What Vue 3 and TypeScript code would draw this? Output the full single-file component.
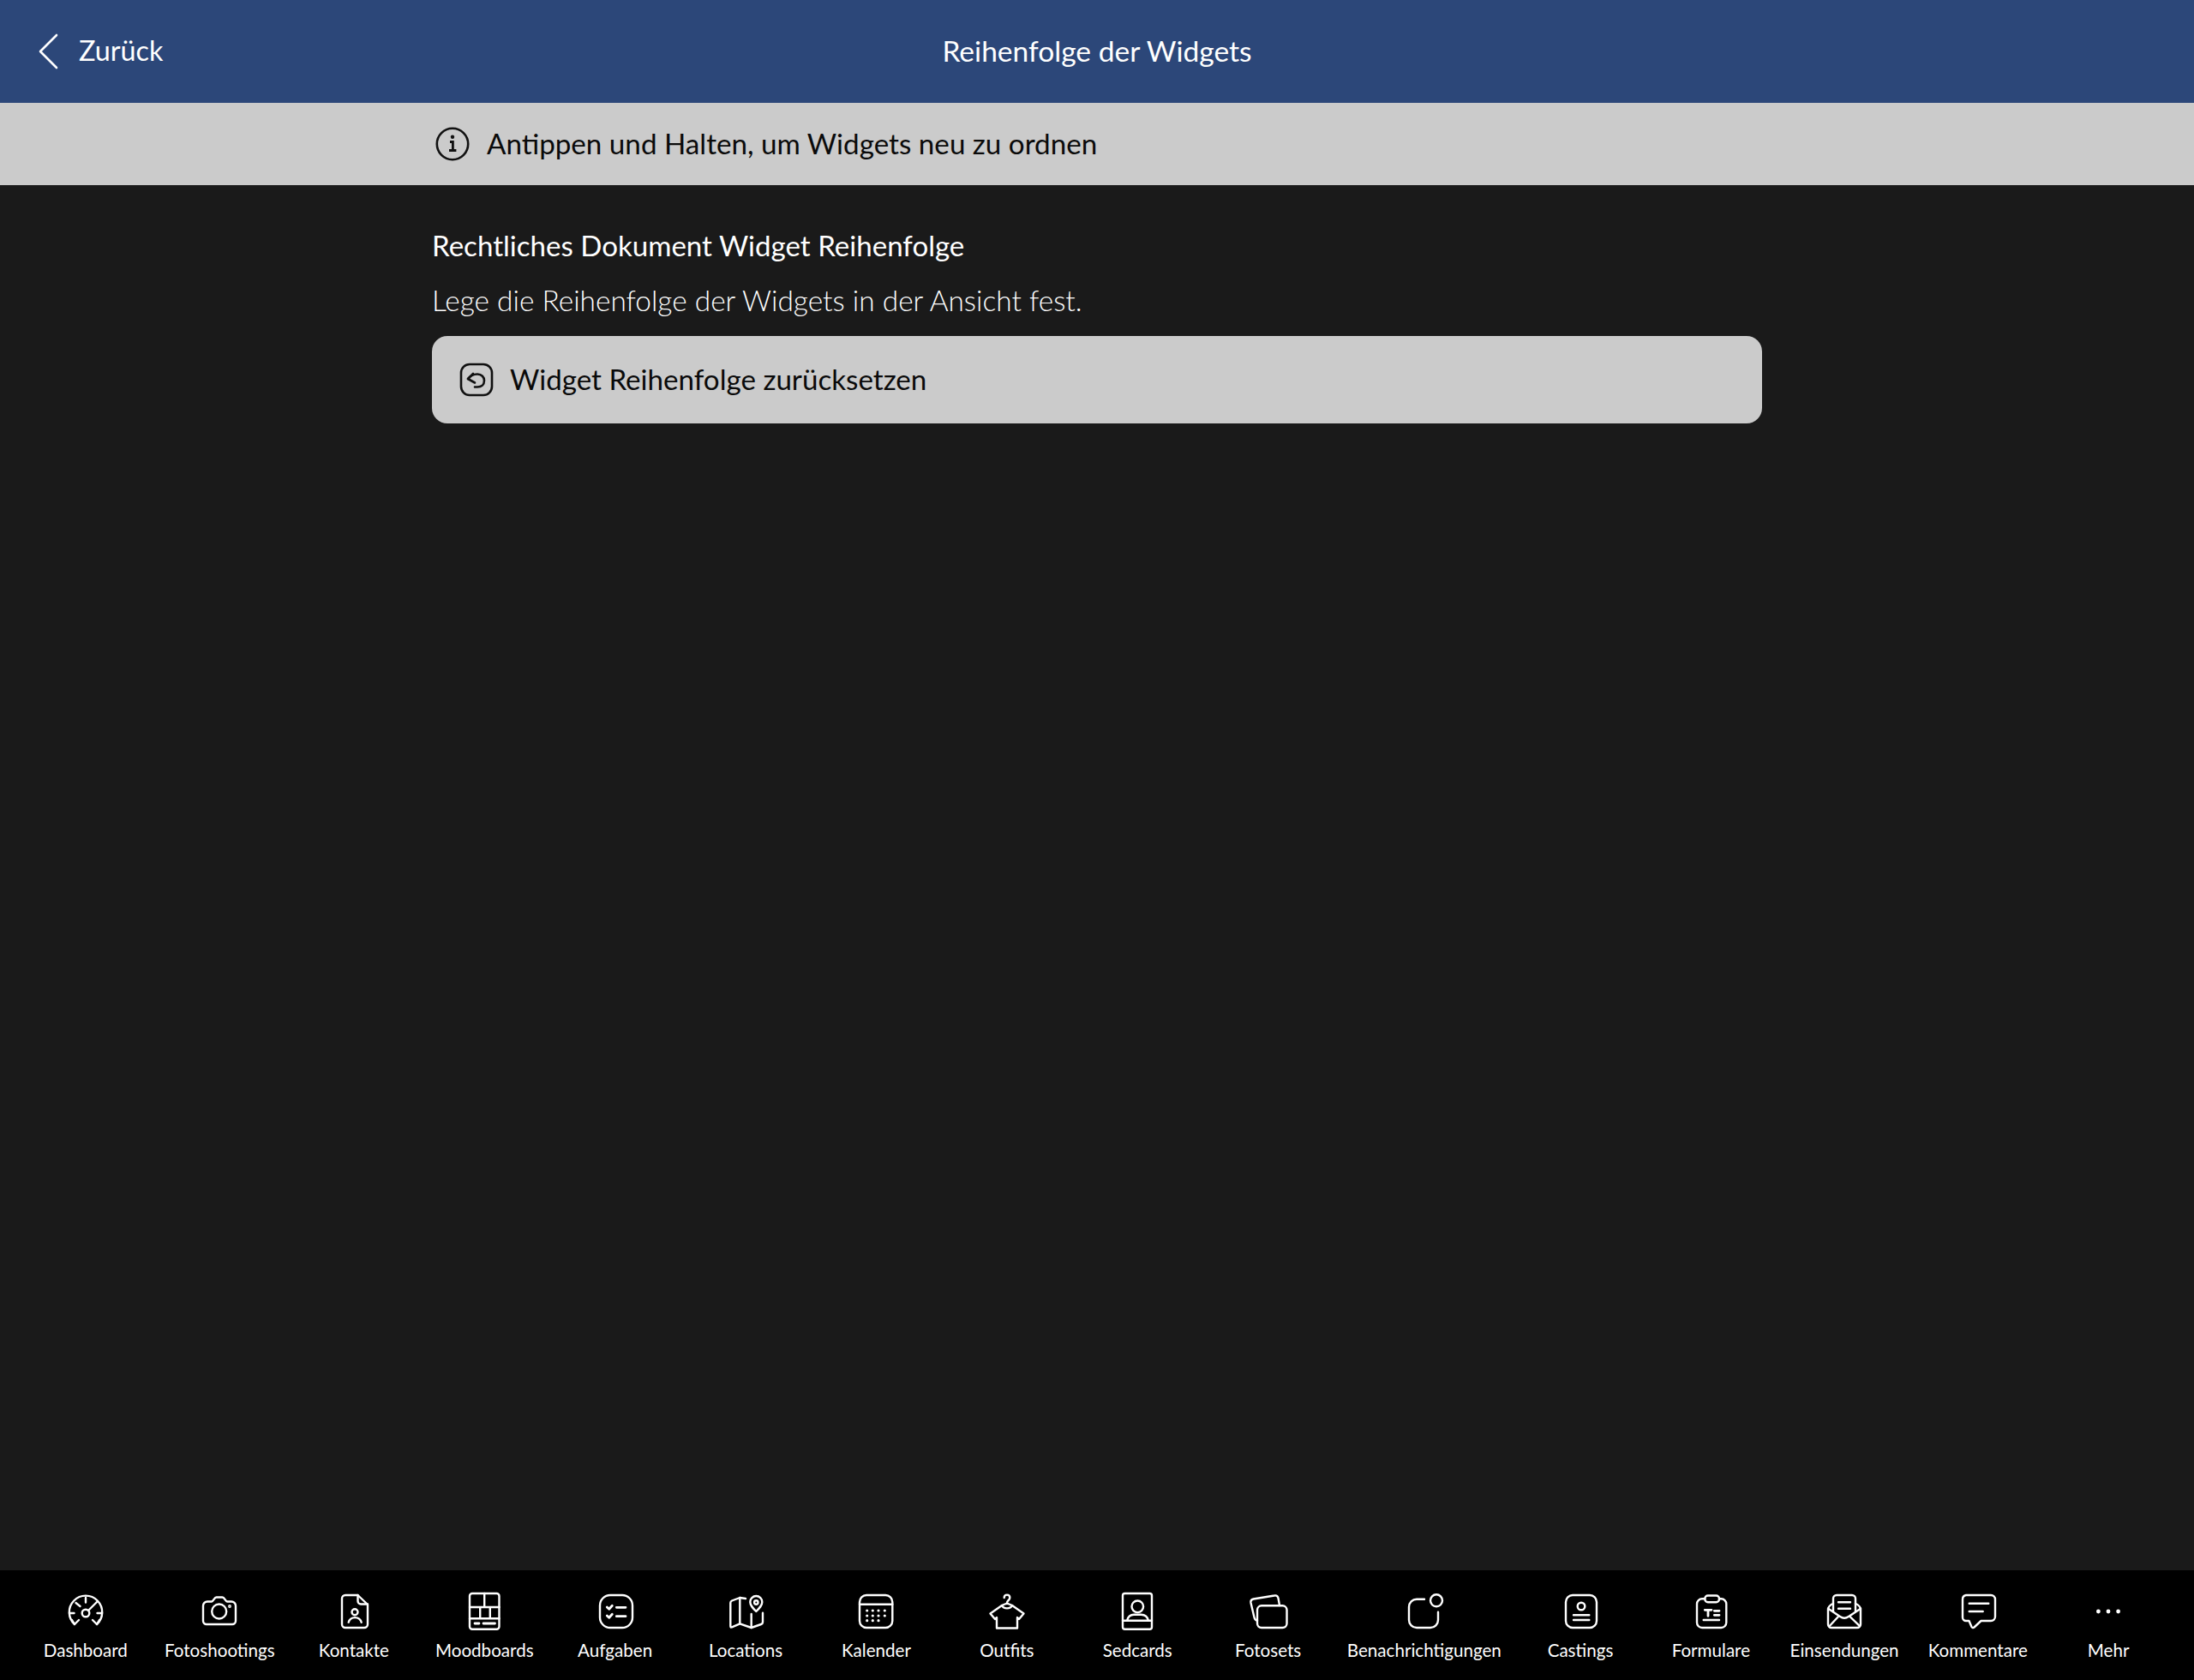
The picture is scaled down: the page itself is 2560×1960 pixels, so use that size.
<script setup lang="ts">
const tabs: string[] = [
  'Dashboard', 'Fotoshootings', 'Kontakte', 'Moodboards',
  'Aufgaben', 'Locations', 'Kalender', 'Outfits',
  'Sedcards', 'Fotosets', 'Benachrichtigungen', 'Castings',
  'Formulare', 'Einsendungen', 'Kommentare', 'Mehr',
]
</script>

<template>
  <div class="page">
    <header class="nav">
      <button class="back">
        <svg width="28" height="44" viewBox="0 0 28 44" fill="none"><path d="M24 3 L5 22 L24 41" stroke="#fff" stroke-width="2.6" stroke-linecap="round" stroke-linejoin="round"/></svg>
        <span>Zurück</span>
      </button>
      <h1>Reihenfolge der Widgets</h1>
    </header>
    <div class="hint">
      <div class="inner">
        <svg width="40" height="40" viewBox="0 0 40 40" fill="none"><circle cx="20" cy="20" r="18.2" stroke="#111" stroke-width="2.6"/><circle cx="20" cy="11.800" r="2.200" fill="#111"/><path d="M17 17.500h3.400v9.500M16 27.500h8.400" stroke="#111" stroke-width="2.8"/></svg>
        <span>Antippen und Halten, um Widgets neu zu ordnen</span>
      </div>
    </div>
    <main class="content">
      <div class="inner column">
        <h2>Rechtliches Dokument Widget Reihenfolge</h2>
        <p>Lege die Reihenfolge der Widgets in der Ansicht fest.</p>
        <button class="reset">
          <svg width="40" height="40" viewBox="0 0 40 40" fill="none" stroke="#111" stroke-width="2.6" stroke-linecap="round" stroke-linejoin="round"><rect x="2" y="2" width="36" height="36" rx="10"/><path d="M16 13 L10 19 L18 23.500"/><path d="M10 19 C13 15 17 13.500 21 13.500 C26 13.500 29 17 29 21 C29 25.500 26 28.500 21 28.500 H18"/></svg>
          <span>Widget Reihenfolge zurücksetzen</span>
        </button>
      </div>
    </main>
    <nav class="tabs">
      <div v-for="(t, i) in tabs" :key="t" class="tab">
        <svg width="48" height="48" viewBox="0 0 48 48" fill="none" stroke="#fff" stroke-width="2.4" stroke-linecap="round" stroke-linejoin="round">
          <g v-if="i === 0">
            <path d="M11 39 A19.200 19.200 0 1 1 37 39"/>
            <path d="M24 8v5.500M12.500 14l5 4M5 26h5.500M43 26h-5.500M11 39l5-5M37 39l-5-5M8 34l3 5M40 34l-3 5"/>
            <circle cx="24" cy="26" r="4.300"/><path d="M27 23l10-10"/>
          </g>
          <g v-else-if="i === 1">
            <path d="M10 12.500h5c2 0 3-5 5.500-5h7c2.500 0 3.500 5 5.500 5h5a5 5 0 0 1 5 5V35a4 4 0 0 1-4 4H9a4 4 0 0 1-4-4V17.500a5 5 0 0 1 5-5z"/>
            <circle cx="23.700" cy="24" r="8.500"/><circle cx="36" cy="18" r="0.700"/>
          </g>
          <g v-else-if="i === 2">
            <path d="M14 5h14.500L40 16v23a4 4 0 0 1-4 4H14a4 4 0 0 1-4-4V9a4 4 0 0 1 4-4z"/>
            <path d="M28.500 5v7a3.500 3.500 0 0 0 3.500 3.500h8"/><circle cx="25" cy="24.700" r="3.500"/><path d="M17.700 36.700c2-7.500 13-7.500 15 0"/>
          </g>
          <g v-else-if="i === 3">
            <rect x="7" y="3" width="34.500" height="41.700" rx="3"/>
            <path d="M7 19h34.500M24.200 3v16M7 32.300h34.500M19.200 19v13.300M30.800 19v13.300"/>
            <path stroke-width="2.800" d="M13 38h5M23 38h13.500"/>
          </g>
          <g v-else-if="i === 4">
            <rect x="6" y="5" width="38" height="38" rx="12"/>
            <path stroke-width="2.800" d="M14.300 19l2.400 2.300 3.600-4M14.300 29l2.400 2.300 3.600-4M25.300 19.300H36M25.300 29.700H36"/>
          </g>
          <g v-else-if="i === 5">
            <path d="M24 9 L17.300 8 L8 11.500 C7 12 6.300 12.500 6.300 14 V41 C6.300 42.500 7 42.800 8 42.300 L17.300 38.300 L30.700 43 L42 39 C43.500 38.500 44 38 44 36.500 V25.700"/>
            <path d="M17.300 8V38M30.700 27V43"/>
            <path d="M36.300 24c-4-4-7-7-7-11a7 7 0 0 1 14 0c0 4-3 7-7 11z"/><circle cx="36.300" cy="13.500" r="2.200"/>
          </g>
          <g v-else-if="i === 6">
            <rect x="5" y="5" width="38.300" height="38" rx="8"/>
            <path d="M5 15.700h38.300"/>
            <path stroke-width="3.200" d="M13.700 23h.01M20.300 23h.01M27 23h.01M34.300 23h.01M13.700 29h.01M20.300 29h.01M27 29h.01M34.300 29h.01M13.700 34.700h.01M20.300 34.700h.01M27 34.700h.01"/>
          </g>
          <g v-else-if="i === 7">
            <path d="M20.700 8c0-4.500 6.600-4.500 6.600 0 0 3-3.300 3-3.300 6v1"/>
            <path d="M18 17 L24 14.500 L30 17 C28 21.500 20 21.500 18 17z"/>
            <path d="M18 17 L4.500 26.500 L10 33 L12 31 V43.500 H36 V31 L38 33 L43.500 26.500 L30 17"/>
          </g>
          <g v-else-if="i === 8">
            <rect x="7" y="3" width="34" height="41.700" rx="2.500"/>
            <circle cx="24.300" cy="18.300" r="6.800"/>
            <path d="M7 34.700h34M12 34.700c1-4 3-7 8-7h8.500c5 0 7.500 3 8.500 7"/>
          </g>
          <g v-else-if="i === 9">
            <path d="M11 34.500C9 34.500 8 33 7.500 31L3.500 14C3 11.500 4.500 10 6.500 9.500L31 5.500C33.500 5 35 6.500 35.500 8.500L37 17"/>
            <rect x="11" y="17.300" width="34.500" height="25.700" rx="5"/>
          </g>
          <g v-else-if="i === 10">
            <path d="M24 9.700h-9a9 9 0 0 0-9 9V34a9 9 0 0 0 9 9h16a9 9 0 0 0 9-9V24.700"/>
            <circle cx="38" cy="11.300" r="7"/>
          </g>
          <g v-else-if="i === 11">
            <rect x="7" y="5" width="36" height="38" rx="8"/>
            <circle cx="25" cy="18" r="4.300"/><path d="M16 28.300h18.300M16 34h18.300"/>
          </g>
          <g v-else-if="i === 12">
            <path d="M17.300 9.300H14a6 6 0 0 0-6 6V37a6 6 0 0 0 6 6h22.300a6 6 0 0 0 6-6V15.300a6 6 0 0 0-6-6H34"/>
            <rect x="17.300" y="5.500" width="16.700" height="7.800" rx="3.500"/>
            <path stroke-width="2.800" d="M17.300 22.300H25M21 22.300V29.300M28.300 23.300H34M28.300 28.300H34"/>
            <path d="M15.700 34H34"/>
          </g>
          <g v-else-if="i === 13">
            <path d="M11 24V9a4 4 0 0 1 4-4h18a4 4 0 0 1 4 4v15"/>
            <path d="M17 13.300h14M17 20.700h14"/>
            <path d="M11 14.700c-3 1.500-6 3-6 7V39a4 4 0 0 0 4 4h30a4 4 0 0 0 4-4V21.700c0-4-3-5.500-6-7"/>
            <path d="M5.300 20.700L19 30c3 2 7 2 10 0l14-9.300M7 40.700L17 30M41.500 40.700L30.500 30"/>
          </g>
          <g v-else-if="i === 14">
            <path d="M10 5h29a5 5 0 0 1 5 5v20a5 5 0 0 1-5 5H27.500l-8 7.500c-1 1-2.500.5-3-.5l-3-7H10a4 4 0 0 1-4-4V10a5 5 0 0 1 4-5z"/>
            <path d="M13.700 14.700h22.600M13.700 24h16"/>
          </g>
          <g v-else>
            <circle cx="12.400" cy="24" r="2.400" fill="#fff" stroke="none"/><circle cx="24" cy="24" r="2.400" fill="#fff" stroke="none"/><circle cx="35.600" cy="24" r="2.400" fill="#fff" stroke="none"/>
          </g>
        </svg>
        <span>{{ t }}</span>
      </div>
    </nav>
  </div>
</template>

<style scoped>
.page {
  width: 2560px;
  height: 1960px;
  display: flex;
  flex-direction: column;
  background: #1a1a1a;
  font-family: Lato, "Noto Sans", sans-serif;
  overflow: hidden;
}
.nav {
  height: 120px;
  flex: none;
  background: #2c4779;
  display: flex;
  align-items: center;
  justify-content: center;
  position: relative;
  color: #fff;
}
.nav h1 {
  margin: 0 0 3px;
  font-size: 33.55px;
  font-weight: 400;
  line-height: 40px;
}
.back {
  position: absolute;
  left: 42px;
  top: 38px;
  display: flex;
  align-items: center;
  gap: 22px;
  padding: 0;
  border: 0;
  background: none;
  color: #fff;
  font: inherit;
  font-size: 32.3px;
  font-weight: 400;
}
.back span {
  margin-bottom: 3px;
}
.hint {
  height: 96px;
  flex: none;
  background: #cbcbcb;
  display: flex;
  align-items: center;
  justify-content: center;
}
.inner {
  width: 1552px;
  display: flex;
  align-items: center;
}
.hint .inner {
  box-sizing: border-box;
  padding-left: 4px;
  gap: 20px;
  color: #0a0a0a;
  font-size: 33.2px;
  font-weight: 400;
}
.hint span {
  margin-bottom: 3px;
}
.content {
  flex: 1;
  display: flex;
  justify-content: center;
  padding-top: 46px;
}
.column {
  flex-direction: column;
  align-items: stretch;
}
h2 {
  margin: 0;
  color: #fff;
  font-size: 33.1px;
  font-weight: 400;
  line-height: 48px;
}
p {
  margin: 16px 0 0;
  color: #fff;
  font-size: 33.45px;
  font-weight: 300;
  line-height: 48px;
}
.reset {
  margin-top: 18px;
  height: 102px;
  background: #cbcbcb;
  border: 0;
  border-radius: 18px;
  display: flex;
  align-items: center;
  gap: 19px;
  padding: 0 32px;
  color: #0a0a0a;
  font: inherit;
  font-size: 33.15px;
  font-weight: 400;
}
.reset span {
  margin-bottom: 3px;
}
.tabs {
  height: 128px;
  flex: none;
  background: #000;
  display: flex;
  justify-content: center;
}
.tab {
  box-sizing: border-box;
  min-width: 152.4px;
  padding: 24px 16px 0;
  display: flex;
  flex-direction: column;
  align-items: center;
  gap: 8px;
  color: #fff;
  font-size: 20.6px;
  white-space: nowrap;
}
.tab span {
  line-height: 26px;
}
</style>
